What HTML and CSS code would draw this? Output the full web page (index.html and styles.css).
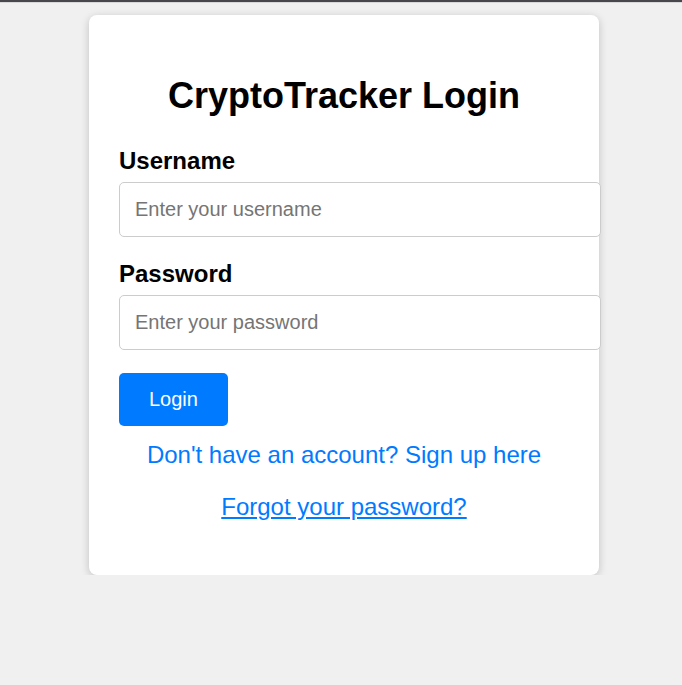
FILE: index.html
```html
<!DOCTYPE html>
<html lang="en">
<head>
<meta charset="utf-8">
<title>CryptoTracker Login</title>
<link rel="stylesheet" href="styles.css">
</head>
<body>
<div class="topbar"></div>
<main class="page">
  <div class="card">
    <h1 class="title">CryptoTracker Login</h1>
    <form class="form">
      <label class="label" for="username">Username</label>
      <input class="input" id="username" type="text" placeholder="Enter your username">
      <label class="label" for="password">Password</label>
      <input class="input" id="password" type="password" placeholder="Enter your password">
      <button class="btn" type="button">Login</button>
    </form>
    <p class="link-row"><a class="link" href="#">Don't have an account? Sign up here</a></p>
    <p class="link-row"><a class="link link-underline" href="#">Forgot your password?</a></p>
  </div>
</main>
</body>
</html>
```
FILE: styles.css
```css
html, body {
  margin: 0;
  padding: 0;
}
body {
  background: #f0f0f0;
  font-family: "Liberation Sans", Arial, sans-serif;
  color: #000;
}
.topbar {
  height: 2px;
  background: #47474c;
  border-bottom: 1px solid #d8d8d8;
}
.page {
  display: flex;
  justify-content: center;
  padding-left: 6px;
  padding-top: 12px;
}
.card {
  width: 450px;
  padding: 30px 30px 54px;
  background: #fff;
  border-radius: 8px;
  box-shadow: 0 2px 8px rgba(0, 0, 0, 0.2);
}
.title {
  margin: 30px 0 31px;
  font-size: 36px;
  line-height: 41px;
  font-weight: bold;
  text-align: center;
}
.form {
  display: flex;
  flex-direction: column;
  align-items: flex-start;
}
.label {
  display: block;
  font-size: 24px;
  line-height: 28px;
  font-weight: bold;
  margin-bottom: 7px;
}
.input {
  display: block;
  width: 100%;
  box-sizing: content-box;
  padding: 15px;
  margin: 0 0 23px;
  border: 1px solid #ccc;
  border-radius: 5px;
  font-family: "Liberation Sans", Arial, sans-serif;
  font-size: 20px;
  line-height: 23px;
  height: 23px;
  color: #000;
  background: #fff;
  outline: none;
}
.input::placeholder {
  color: #757575;
}
.btn {
  padding: 15px 30px;
  border: none;
  border-radius: 5px;
  background: #007bff;
  color: #fff;
  font-family: "Liberation Sans", Arial, sans-serif;
  font-size: 20px;
  line-height: 23px;
  cursor: pointer;
}
.link-row {
  margin: 15px 0 0;
  text-align: center;
  font-size: 24px;
  line-height: 28px;
}
.link-row + .link-row {
  margin-top: 24px;
}
.link {
  color: #007bff;
  text-decoration: none;
}
.link-underline {
  text-decoration: underline;
}
```
